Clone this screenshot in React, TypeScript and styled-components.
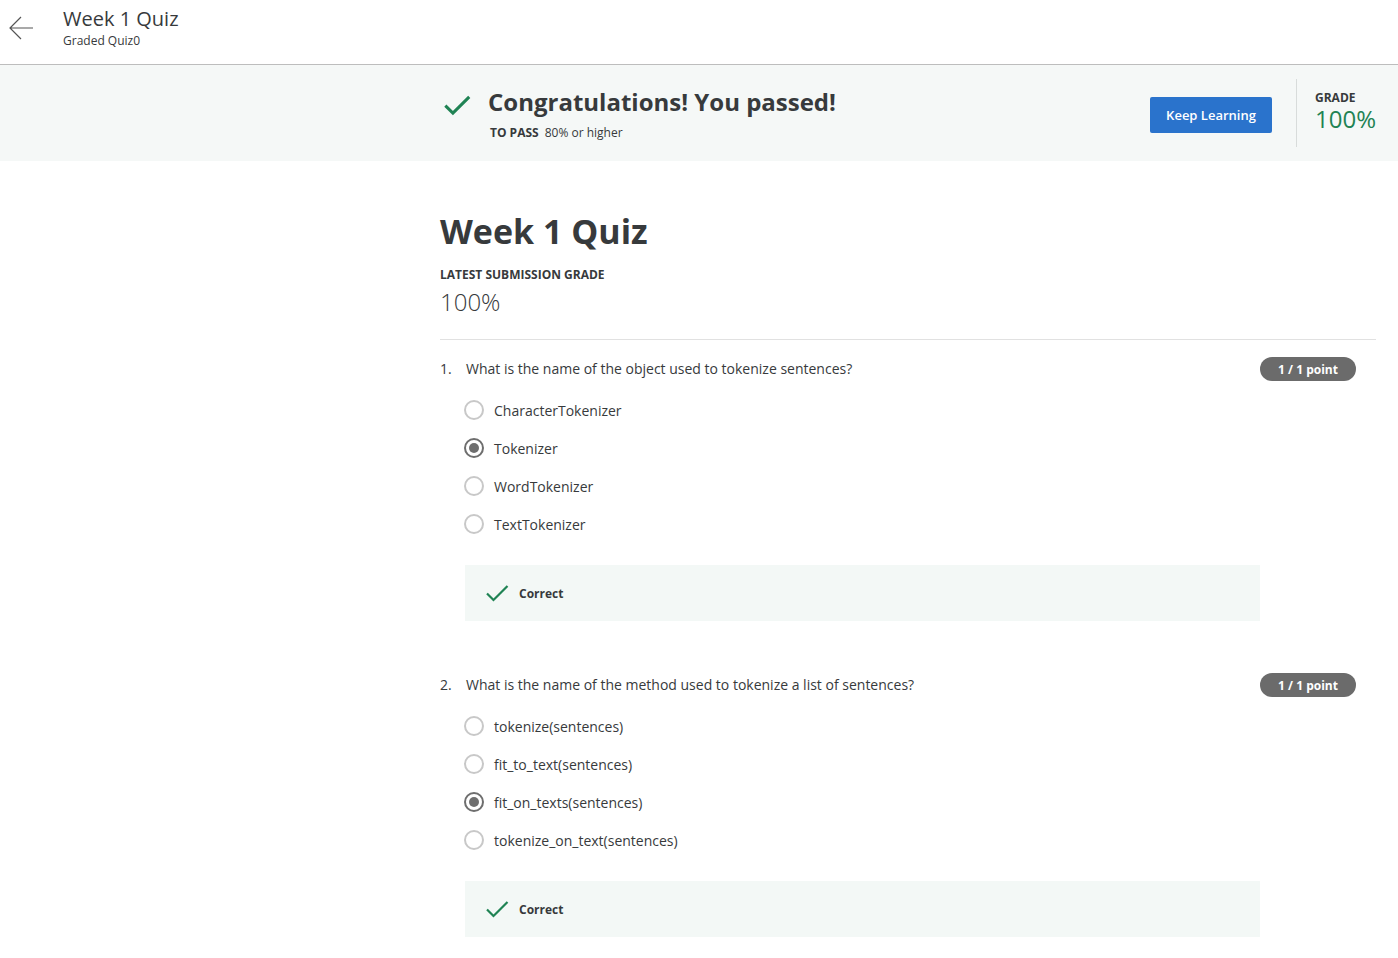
import React from "react";
import styled, { createGlobalStyle } from "styled-components";

const GlobalStyle = createGlobalStyle`
  html, body { margin: 0; padding: 0; background: #ffffff; }
  body { font-family: "Open Sans", "Noto Sans", Arial, sans-serif; color: #373a3c; }
  * { box-sizing: border-box; }
`;

const Header = styled.header`
  height: 65px;
  border-bottom: 1px solid #bdbdbd;
  display: flex;
  align-items: flex-start;
`;

const BackButton = styled.button`
  width: 44px;
  height: 56px;
  margin-left: 0;
  padding: 0 0 0 8px;
  border: none;
  background: transparent;
  display: flex;
  align-items: center;
  cursor: pointer;
`;

const HeaderText = styled.div`
  margin-left: 19px;
  padding-top: 5px;
  display: flex;
  flex-direction: column;
`;

const HeaderTitle = styled.div`
  font-size: 20px;
  line-height: 28px;
  color: #373a3c;
`;

const HeaderSub = styled.div`
  font-size: 12px;
  line-height: 16px;
  color: #373a3c;
`;

const Banner = styled.section`
  background: #f5f8f7;
  height: 96px;
  padding: 0 22px 0 440px;
  display: flex;
  align-items: center;
  justify-content: space-between;
`;

const PassGroup = styled.div`
  display: flex;
  align-items: flex-start;
  margin-top: 0;
`;

const BigCheck = styled.div`
  width: 48px;
  padding-left: 3px;
  padding-top: 5px;
`;

const PassText = styled.div`
  display: flex;
  flex-direction: column;
`;

const PassTitle = styled.h2`
  margin: 0;
  font-size: 24px;
  line-height: 32px;
  font-weight: 700;
  color: #373a3c;
`;

const PassReq = styled.div`
  margin-top: 7px;
  padding-left: 2px;
  font-size: 12px;
  line-height: 16px;
  color: #373a3c;
  b { font-weight: 700; margin-right: 6px; }
`;

const RightGroup = styled.div`
  display: flex;
  align-items: center;
  height: 100%;
`;

const KeepButton = styled.button`
  background: #2a73cc;
  color: #ffffff;
  border: none;
  border-radius: 2px;
  height: 36px;
  width: 122px;
  font-family: "Open Sans", Arial, sans-serif;
  font-size: 13px;
  font-weight: 600;
  cursor: pointer;
  margin-top: 4px;
`;

const VDivider = styled.div`
  width: 1px;
  height: 68px;
  background: #d8dcdb;
  margin: 0 18px 0 24px;
`;

const GradeBox = styled.div`
  display: flex;
  flex-direction: column;
  width: 61px;
  margin-top: -6px;
`;

const GradeLabel = styled.div`
  font-size: 12px;
  font-weight: 700;
  line-height: 16px;
  color: #373a3c;
`;

const GradeValue = styled.div`
  margin-top: 1px;
  font-size: 24px;
  line-height: 24px;
  font-weight: 400;
  color: #1f8354;
  white-space: nowrap;
`;

const Main = styled.main`
  padding: 46px 22px 40px 440px;
`;

const Title = styled.h1`
  margin: 0;
  font-size: 34px;
  line-height: 48px;
  font-weight: 700;
  color: #373a3c;
`;

const SubLabel = styled.div`
  margin-top: 12px;
  font-size: 12px;
  font-weight: 700;
  line-height: 16px;
  text-transform: uppercase;
`;

const SubGrade = styled.div`
  margin-top: 3px;
  font-size: 24px;
  line-height: 32px;
  font-weight: 300;
`;

const Rule = styled.hr`
  margin: 21px 0 0;
  border: none;
  border-top: 1px solid #e1e1e1;
`;

const Question = styled.section<{ $first?: boolean }>`
  display: flex;
  align-items: flex-start;
  padding-right: 20px;
  margin-top: ${(p) => (p.$first ? "19px" : "54px")};
`;

const QNum = styled.div`
  width: 26px;
  font-size: 14px;
  line-height: 20px;
`;

const QBody = styled.div`
  flex: 1;
  display: flex;
  flex-direction: column;
`;

const QText = styled.div`
  font-size: 14px;
  line-height: 20px;
  height: 20px;
`;

const Options = styled.div`
  margin-top: 12px;
  display: flex;
  flex-direction: column;
`;

const Option = styled.label`
  display: flex;
  align-items: center;
  height: 38px;
  margin-left: -2px;
  font-size: 14px;
  color: #373a3c;
`;

const Radio = styled.span<{ $checked?: boolean }>`
  width: 20px;
  height: 20px;
  border-radius: 50%;
  border: 2px solid ${(p) => (p.$checked ? "#6e6e6e" : "#c8c8c8")};
  display: flex;
  align-items: center;
  justify-content: center;
  margin-right: 10px;
  flex-shrink: 0;
  &::after {
    content: "";
    width: 10px;
    height: 10px;
    border-radius: 50%;
    background: ${(p) => (p.$checked ? "#6e6e6e" : "transparent")};
  }
`;

const Feedback = styled.div`
  margin-top: 22px;
  margin-left: -1px;
  height: 56px;
  background: #f3f8f6;
  display: flex;
  align-items: center;
  padding-left: 20px;
  font-size: 12px;
  font-weight: 700;
  color: #373a3c;
  gap: 10px;
`;

const Badge = styled.div`
  width: 96px;
  height: 24px;
  border-radius: 12px;
  background: #6b6b6b;
  color: #ffffff;
  font-size: 12px;
  font-weight: 700;
  display: flex;
  align-items: center;
  justify-content: center;
  margin-top: -2px;
`;

const Check = ({ size, stroke }: { size: number; stroke: number }) => (
  <svg width={size} height={size} viewBox="0 0 24 24" fill="none">
    <path d="M2 12.5 L8.5 19 L22.5 5" stroke="#1f8354" strokeWidth={stroke} strokeLinecap="butt" strokeLinejoin="miter" />
  </svg>
);

const questions = [
  {
    n: 1,
    text: "What is the name of the object used to tokenize sentences?",
    options: ["CharacterTokenizer", "Tokenizer", "WordTokenizer", "TextTokenizer"],
    selected: 1,
  },
  {
    n: 2,
    text: "What is the name of the method used to tokenize a list of sentences?",
    options: [
      "tokenize(sentences)",
      "fit_to_text(sentences)",
      "fit_on_texts(sentences)",
      "tokenize_on_text(sentences)",
    ],
    selected: 2,
  },
];

export default function App() {
  return (
    <>
      <GlobalStyle />
      <Header>
        <BackButton aria-label="Back">
          <svg width="26" height="26" viewBox="0 0 26 26" fill="none">
            <path d="M25 13 H2 M13 2 L2 13 L13 24" stroke="#555" strokeWidth="1.2" />
          </svg>
        </BackButton>
        <HeaderText>
          <HeaderTitle>Week 1 Quiz</HeaderTitle>
          <HeaderSub>Graded Quiz0</HeaderSub>
        </HeaderText>
      </Header>
      <Banner>
        <PassGroup>
          <BigCheck>
            <Check size={28} stroke={2.6} />
          </BigCheck>
          <PassText>
            <PassTitle>Congratulations! You passed!</PassTitle>
            <PassReq>
              <b>TO PASS</b>80% or higher
            </PassReq>
          </PassText>
        </PassGroup>
        <RightGroup>
          <KeepButton>Keep Learning</KeepButton>
          <VDivider />
          <GradeBox>
            <GradeLabel>GRADE</GradeLabel>
            <GradeValue>100%</GradeValue>
          </GradeBox>
        </RightGroup>
      </Banner>
      <Main>
        <Title>Week 1 Quiz</Title>
        <SubLabel>Latest Submission Grade</SubLabel>
        <SubGrade>100%</SubGrade>
        <Rule />
        {questions.map((q, qi) => (
          <Question key={q.n} $first={qi === 0}>
            <QNum>{q.n}.</QNum>
            <QBody>
              <QText>{q.text}</QText>
              <Options>
                {q.options.map((o, i) => (
                  <Option key={o}>
                    <Radio $checked={i === q.selected} />
                    {o}
                  </Option>
                ))}
              </Options>
              <Feedback>
                <Check size={24} stroke={2.2} />
                Correct
              </Feedback>
            </QBody>
            <Badge>1 / 1 point</Badge>
          </Question>
        ))}
      </Main>
    </>
  );
}
